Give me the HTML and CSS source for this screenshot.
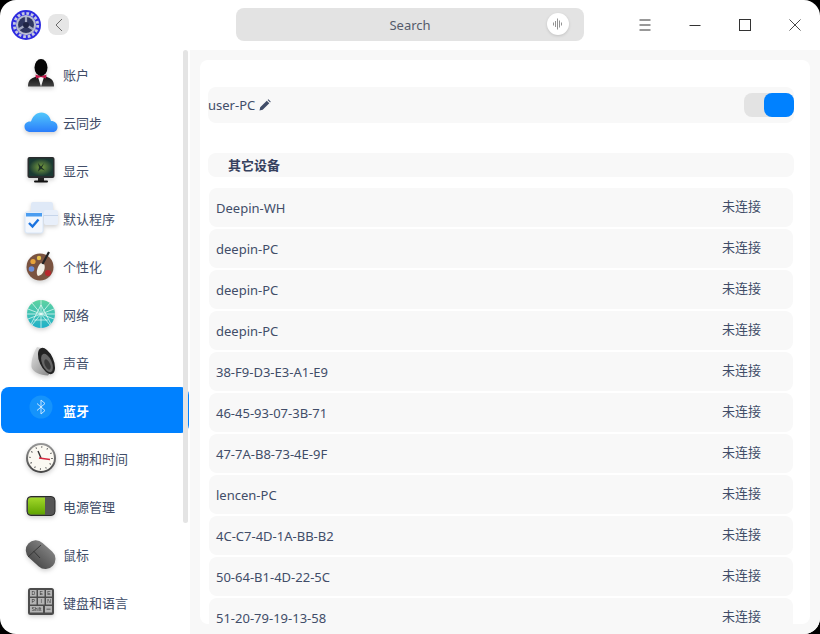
FILE: index.html
```html
<!DOCTYPE html>
<html lang="zh">
<head>
  <meta charset="UTF-8">
  <title>控制中心</title>
  <link rel="stylesheet" href="styles.css">
</head>
<body>
  <div class="window">
    <header class="titlebar">
      <div class="title-left">
        <svg class="logo" width="30" height="30" viewBox="0 0 32 32">
          <circle cx="16" cy="16" r="16" fill="#2f2ce0"/>
          <circle cx="16" cy="16" r="12.500" fill="none" stroke="#c4c8e2" stroke-width="3" stroke-dasharray="2.900 2.010"/>
          <circle cx="16" cy="16" r="10.800" fill="#b7bbd0"/>
          <circle cx="16" cy="16" r="8.500" fill="#2f3660"/>
          <path d="M16 16 L16 7.500 M16 16 L8.500 20.500 M16 16 L23.500 20.500" stroke="#a2a7c0" stroke-width="2.400"/>
          <circle cx="16" cy="16" r="3.200" fill="#1f2444"/>
        </svg>
        <button class="back-btn">
          <svg width="10" height="14" viewBox="0 0 10 14"><path d="M8 1 L2 7 L8 13" fill="none" stroke="#6a6a6a" stroke-width="1"/></svg>
        </button>
      </div>
      <div class="search">
        <span>Search</span>
        <span class="voice">
          <svg width="12" height="12" viewBox="0 0 12 12"><path d="M1.500 4.500v3M3.500 3v6M5.500 0.500v11M7.500 2.500v7M9.500 4.500v3" stroke="#777" stroke-width="0.800"/></svg>
        </span>
      </div>
      <div class="win-btns">
        <button class="win-btn"><svg width="12" height="12" viewBox="0 0 12 12"><path d="M0.500 1h11M0.500 6h11M0.500 11h11" stroke="#333" stroke-width="1"/></svg></button>
        <button class="win-btn"><svg width="12" height="12" viewBox="0 0 12 12"><path d="M0.500 6.500h11" stroke="#333" stroke-width="1"/></svg></button>
        <button class="win-btn"><svg width="12" height="12" viewBox="0 0 12 12"><rect x="0.500" y="0.500" width="11" height="11" fill="none" stroke="#333"/></svg></button>
        <button class="win-btn"><svg width="12" height="12" viewBox="0 0 12 12"><path d="M0.500 0.500l11 11M11.500 0.500l-11 11" stroke="#333" stroke-width="0.900"/></svg></button>
      </div>
    </header>

    <div class="main">
      <nav class="sidebar">
        <div class="scrollbar"></div>

        <a class="nav-item">
          <svg class="nav-icon" viewBox="0 0 36 36">
            <defs><linearGradient id="suit" x1="0" y1="0" x2="0" y2="1"><stop offset="0" stop-color="#0c0c0c"/><stop offset="1" stop-color="#444"/></linearGradient></defs>
            <path d="M5 30.500 C5 25 7 23 11 21.500 L15 19.500 L21 19.500 L25 21.500 C29 23 31 25 31 30.500 Z" fill="url(#suit)"/>
            <ellipse cx="18" cy="11.500" rx="6.500" ry="8.500" fill="#050505"/>
            <path d="M15 21 L21 21 L18 30.500 Z" fill="#f4f4f4"/>
            <path d="M12.500 18.500 L18 20.500 L23.500 18.500 L23 22.500 L18 21 L13 22.500 Z" fill="#c3164a"/>
          </svg>
          <span>账户</span>
        </a>

        <a class="nav-item">
          <svg class="nav-icon" viewBox="0 0 36 36">
            <defs><linearGradient id="cloud" x1="0" y1="0" x2="0" y2="1"><stop offset="0" stop-color="#52c8fb"/><stop offset="1" stop-color="#2a7dfb"/></linearGradient></defs>
            <path d="M7.500 28 C3.500 28 1.500 25.500 1.500 22.500 C1.500 19.500 4 17 8 17.500 C9.500 12.500 13 8.500 18.500 8.500 C23.500 8.500 27 12.500 28 17 C32 17 34.500 19.500 34.500 23 C34.500 26 32.500 28 29.500 28 Z" fill="url(#cloud)"/>
          </svg>
          <span>云同步</span>
        </a>

        <a class="nav-item">
          <svg class="nav-icon" viewBox="0 0 36 36">
            <defs><radialGradient id="screen"><stop offset="0" stop-color="#7aa040"/><stop offset="1" stop-color="#1a3a33"/></radialGradient></defs>
            <rect x="4.500" y="5" width="27" height="21" rx="2" fill="#2a2c2e"/>
            <rect x="6" y="6.500" width="24" height="17.500" fill="url(#screen)"/>
            <path d="M15 11l3 3.500 3-3.500-2 4.500 3 3-4-1.500-3 2.500 1-4z" fill="#1d3024"/>
            <rect x="15" y="26" width="6" height="3" fill="#222"/>
            <rect x="11" y="28.500" width="14" height="2" rx="1" fill="#111"/>
          </svg>
          <span>显示</span>
        </a>

        <a class="nav-item">
          <svg class="nav-icon" viewBox="0 0 36 36">
            <rect x="8" y="2" width="22" height="13" rx="2" fill="#dfe9f7"/>
            <rect x="21" y="10" width="14" height="15" rx="2" fill="#e8effa"/>
            <rect x="21" y="15" width="14" height="1" fill="#c6d5ea"/>
            <rect x="2" y="12" width="18" height="21" rx="2" fill="#f3f7fd" stroke="#d8e6f8"/>
            <rect x="3" y="13" width="16" height="3.500" fill="#4b9df0"/>
            <path d="M6 23l3.500 3.500 6-7" fill="none" stroke="#1a73e0" stroke-width="2.400"/>
          </svg>
          <span>默认程序</span>
        </a>

        <a class="nav-item">
          <svg class="nav-icon" viewBox="0 0 36 36">
            <circle cx="17" cy="19" r="13.500" fill="#7a5340"/>
            <circle cx="10" cy="13.500" r="2.600" fill="#e8a33a"/>
            <circle cx="16" cy="10" r="2.200" fill="#e7c14b"/>
            <circle cx="8.500" cy="21" r="2.800" fill="#6d8fd8"/>
            <circle cx="25" cy="25" r="3" fill="#b8262c"/>
            <path d="M21 16 C23 19 21 27 15 28 C12.500 26 14 18 18 15 Z" fill="#f2efe6"/>
            <path d="M19.500 16 L26 4" stroke="#222" stroke-width="2.200"/>
          </svg>
          <span>个性化</span>
        </a>

        <a class="nav-item">
          <svg class="nav-icon" viewBox="0 0 36 36">
            <defs><linearGradient id="globe" x1="0" y1="0" x2="0" y2="1"><stop offset="0" stop-color="#5fd3a0"/><stop offset="1" stop-color="#1fb0c9"/></linearGradient></defs>
            <circle cx="18" cy="18" r="14" fill="url(#globe)"/>
            <path d="M18 4 L18 32 M9 7 L27 29 M27 7 L9 29 M4 18 H32 M18 9 L8 28 M18 9 L28 28 M5 23 L31 13 M5 13 L31 23 M11 24 H25" stroke="#eefcf8" stroke-width="0.700" fill="none"/>
          </svg>
          <span>网络</span>
        </a>

        <a class="nav-item">
          <svg class="nav-icon" viewBox="0 0 36 36">
            <defs><linearGradient id="cone" x1="0" y1="0" x2="1" y2="1"><stop offset="0" stop-color="#e6e6e6"/><stop offset="1" stop-color="#7c7c7c"/></linearGradient></defs>
            <path d="M14 3 C10 10 8 17 8.500 23 C9.500 28 17 31 25 31.500 L31 24 L22 5 Z" fill="url(#cone)"/>
            <ellipse cx="23.500" cy="17" rx="7" ry="14" transform="rotate(-24 23.500 17)" fill="#232323"/>
            <ellipse cx="24" cy="19" rx="4.800" ry="9.800" transform="rotate(-24 24 19)" fill="#666"/>
            <ellipse cx="24.500" cy="20.500" rx="2.600" ry="5.500" transform="rotate(-24 24.500 20.500)" fill="#3a3a3a"/>
          </svg>
          <span>声音</span>
        </a>

        <a class="nav-item selected">
          <svg class="nav-icon no-shadow" viewBox="0 0 36 36">
            <circle cx="18" cy="15" r="11.500" fill="#1593fb"/>
            <path d="M14 11.500 L22 18.500 L18 22 L18 8 L22 11.500 L14 18.500" fill="none" stroke="#d8eeff" stroke-width="0.900"/>
          </svg>
          <span>蓝牙</span>
        </a>

        <a class="nav-item">
          <svg class="nav-icon" viewBox="0 0 36 36">
            <defs><linearGradient id="rim" x1="0" y1="0" x2="0" y2="1"><stop offset="0" stop-color="#999"/><stop offset="1" stop-color="#444"/></linearGradient></defs>
            <circle cx="18" cy="18" r="15" fill="url(#rim)"/>
            <circle cx="18" cy="18" r="13" fill="#fbf9f2"/>
            <circle cx="18" cy="18" r="11" fill="none" stroke="#555" stroke-width="1.600" stroke-dasharray="1 4.760"/>
            <path d="M18 18 L15 11" stroke="#333" stroke-width="1.400"/>
            <path d="M16 18 L27 19.500" stroke="#d8263c" stroke-width="1.400"/>
          </svg>
          <span>日期和时间</span>
        </a>

        <a class="nav-item">
          <svg class="nav-icon" viewBox="0 0 36 36">
            <defs><linearGradient id="charge" x1="0" y1="0" x2="0" y2="1"><stop offset="0" stop-color="#a2d82a"/><stop offset="1" stop-color="#5fa300"/></linearGradient></defs>
            <rect x="4" y="8.500" width="28" height="19" rx="4" fill="#555" stroke="#2a2a2a"/>
            <path d="M8 9.500 H22 V26.500 H8 A3 3 0 0 1 5 23.500 V12.500 A3 3 0 0 1 8 9.500 Z" fill="url(#charge)"/>
          </svg>
          <span>电源管理</span>
        </a>

        <a class="nav-item">
          <svg class="nav-icon" viewBox="0 0 36 36">
            <defs><linearGradient id="mouse" x1="0" y1="0" x2="0" y2="1"><stop offset="0" stop-color="#7e7e7e"/><stop offset="1" stop-color="#4e4e4e"/></linearGradient></defs>
            <rect x="1" y="9" width="33" height="20" rx="10" transform="rotate(42 18 19)" fill="url(#mouse)"/>
            <path d="M5 21 L18 9 M10.500 15 L17 22" stroke="#333" stroke-width="0.900" fill="none"/>
          </svg>
          <span>鼠标</span>
        </a>

        <a class="nav-item">
          <svg class="nav-icon" viewBox="0 0 36 36">
            <rect x="5" y="4" width="26" height="27" rx="2.500" fill="#4c4c4c"/>
            <g fill="#b4b4b4">
              <rect x="7" y="6" width="6.500" height="6.500"/><rect x="15" y="6" width="6.500" height="6.500"/><rect x="23" y="6" width="6" height="6.500"/>
              <rect x="7" y="14" width="6.500" height="6.500"/><rect x="15" y="14" width="6.500" height="6.500"/><rect x="23" y="14" width="6" height="6.500"/>
              <rect x="7" y="22" width="13" height="6.500"/><rect x="22" y="22" width="7" height="6.500"/>
            </g>
            <g class="key-text">
              <text x="10.200" y="11">D</text><text x="18.200" y="11">E</text><text x="26" y="11">E</text>
              <text x="10.200" y="19">P</text><text x="18.200" y="19">I</text><text x="26" y="19">N</text>
              <text x="13.500" y="27">Shift</text>
            </g>
            <path d="M23.500 25.200h4" stroke="#444" stroke-width="0.800"/>
          </svg>
          <span>键盘和语言</span>
        </a>
      </nav>

      <section class="panel">
        <div class="card">
          <div class="host-row">
            <span class="host-name">user-PC</span>
            <svg width="12" height="12" viewBox="0 0 12 12"><path d="M0.500 11.500 L1.200 8.300 L7.800 1.700 L10.300 4.200 L3.700 10.800 Z M8.600 0.900 L9.400 0.300 L11.700 2.600 L11.100 3.400 Z" fill="#414d68"/></svg>
            <div class="switch"><div class="switch-knob"></div></div>
          </div>

          <h2 class="group-title">其它设备</h2>

          <ul class="device-list">
            <li class="device"><span>Deepin-WH</span><span class="state">未连接</span></li>
            <li class="device"><span>deepin-PC</span><span class="state">未连接</span></li>
            <li class="device"><span>deepin-PC</span><span class="state">未连接</span></li>
            <li class="device"><span>deepin-PC</span><span class="state">未连接</span></li>
            <li class="device"><span>38-F9-D3-E3-A1-E9</span><span class="state">未连接</span></li>
            <li class="device"><span>46-45-93-07-3B-71</span><span class="state">未连接</span></li>
            <li class="device"><span>47-7A-B8-73-4E-9F</span><span class="state">未连接</span></li>
            <li class="device"><span>lencen-PC</span><span class="state">未连接</span></li>
            <li class="device"><span>4C-C7-4D-1A-BB-B2</span><span class="state">未连接</span></li>
            <li class="device"><span>50-64-B1-4D-22-5C</span><span class="state">未连接</span></li>
            <li class="device"><span>51-20-79-19-13-58</span><span class="state">未连接</span></li>
          </ul>
        </div>
      </section>
    </div>
  </div>
</body>
</html>
```

FILE: styles.css
```css
html, body {
  margin: 0;
  padding: 0;
  height: 100%;
  background-color: #000;
  overflow: hidden;
}

body {
  font-family: "Noto Sans", "Noto Sans CJK SC", sans-serif;
  font-size: 13px;
  color: #414d68;
}

button {
  border: none;
  padding: 0;
  background: none;
  display: flex;
  align-items: center;
  justify-content: center;
}

.window {
  width: 820px;
  height: 634px;
  background-color: #fff;
  border-radius: 16px;
  overflow: hidden;
  display: flex;
  flex-direction: column;
}

/* title bar */
.titlebar {
  height: 50px;
  flex: none;
  display: flex;
  align-items: center;
}

.title-left {
  width: 236px;
  height: 50px;
  padding-left: 11px;
  box-sizing: border-box;
  display: flex;
  align-items: center;
  gap: 7px;
}

.back-btn {
  width: 21px;
  height: 21px;
  border-radius: 8px;
  background-color: #e6e6e6;
  margin-top: -1px;
}

.search {
  width: 348px;
  height: 33px;
  margin-top: -1px;
  background-color: #e3e3e3;
  border-radius: 8px;
  position: relative;
  display: flex;
  align-items: center;
  justify-content: center;
  color: #555c6b;
}

.voice {
  position: absolute;
  right: 15px;
  top: 5px;
  width: 22px;
  height: 22px;
  border-radius: 50%;
  background-color: #fff;
  box-shadow: 0 1px 3px rgba(0, 0, 0, 0.15);
  display: flex;
  align-items: center;
  justify-content: center;
}

.win-btns {
  margin-left: auto;
  width: 200px;
  display: flex;
}

.win-btn {
  width: 50px;
  height: 50px;
}

.main {
  flex: 1;
  min-height: 0;
  display: flex;
}

/* left navigation */
.sidebar {
  width: 190px;
  flex: none;
  position: relative;
  padding-top: 1px;
  box-sizing: border-box;
}

.scrollbar {
  position: absolute;
  z-index: 1;
  top: 0;
  left: 183px;
  width: 5px;
  height: 473px;
  border-radius: 3px;
  background-color: #e4e4e4;
}

.nav-item {
  height: 46px;
  width: 188px;
  margin: 0 0 2px 1px;
  border-radius: 8px;
  display: flex;
  align-items: center;
  gap: 4px;
  padding-left: 22px;
  box-sizing: border-box;
}

.nav-icon {
  width: 36px;
  height: 36px;
  flex: none;
  filter: drop-shadow(0 2px 2px rgba(0, 0, 0, 0.18));
}

.nav-icon.no-shadow {
  filter: none;
}

.key-text {
  font-family: "Liberation Sans", sans-serif;
  font-size: 5px;
  fill: #333;
  text-anchor: middle;
}

.nav-item.selected {
  background-color: #0081ff;
  color: #fff;
  font-weight: 700;
}

/* right panel */
.panel {
  flex: 1;
  min-width: 0;
  background-color: #f8f8f8;
  padding: 10px;
  box-sizing: border-box;
  display: flex;
}

.card {
  flex: 1;
  min-width: 0;
  background-color: #fff;
  border-radius: 8px;
  overflow: hidden;
  padding: 27px 16px 0 8px;
}

.host-row {
  height: 36px;
  background-color: #f8f8f8;
  border-radius: 8px;
  display: flex;
  align-items: center;
  gap: 4px;
}

.switch {
  margin-left: auto;
  width: 50px;
  height: 24px;
  background-color: #e3e3e3;
  border-radius: 8px;
  display: flex;
  justify-content: flex-end;
}

.switch-knob {
  width: 30px;
  height: 24px;
  background-color: #0081ff;
  border-radius: 8px;
}

.group-title {
  margin: 30px 0 11px;
  height: 24px;
  line-height: 24px;
  padding-left: 20px;
  font-size: 13px;
  font-weight: 700;
  color: #36415e;
  background-color: #f8f8f8;
  border-radius: 8px;
}

.device-list {
  list-style: none;
  margin: 0 1px;
  padding: 0;
  display: flex;
  flex-direction: column;
  gap: 2px;
}

.device {
  height: 39px;
  flex: none;
  background-color: #f8f8f8;
  border-radius: 8px;
  padding: 0 32px 0 7px;
  display: flex;
  align-items: center;
  justify-content: space-between;
}

.state {
  margin-top: -5px;
}
```
